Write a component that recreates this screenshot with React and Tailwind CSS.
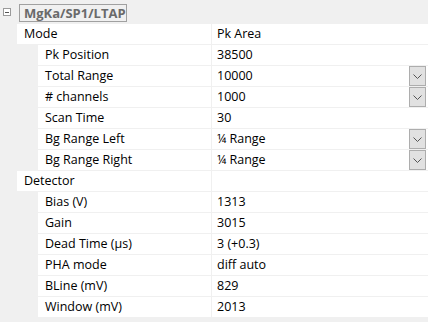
import React from "react";

const rows = [
  { label: "Mode", value: "Pk Area", level: 0 },
  { label: "Pk Position", value: "38500", level: 1 },
  { label: "Total Range", value: "10000", level: 1, dd: true },
  { label: "# channels", value: "1000", level: 1, dd: true },
  { label: "Scan Time", value: "30", level: 1 },
  { label: "Bg Range Left", value: "¼ Range", level: 1, dd: true },
  { label: "Bg Range Right", value: "¼ Range", level: 1, dd: true },
  { label: "Detector", value: "", level: 0 },
  { label: "Bias (V)", value: "1313", level: 1 },
  { label: "Gain", value: "3015", level: 1 },
  { label: "Dead Time (µs)", value: "3 (+0.3)", level: 1 },
  { label: "PHA mode", value: "diff auto", level: 1 },
  { label: "BLine (mV)", value: "829", level: 1 },
  { label: "Window (mV)", value: "2013", level: 1 },
];

function Chevron() {
  return (
    <svg width="9" height="5" viewBox="0 0 9 5" fill="none">
      <path d="M0.5 0.5 L4.5 4.5 L8.5 0.5" stroke="#555" strokeWidth="1" />
    </svg>
  );
}

export default function App() {
  return (
    <div
      className="w-[428px] h-[322px] bg-[#f0f0f0] text-[12.5px] text-black overflow-hidden"
      style={{ fontFamily: '"Open Sans", "Noto Sans", sans-serif' }}
    >
      <div className="h-[24px] flex items-start">
        <div className="mt-[8px] ml-[3px] w-[8px] h-[8px] border border-[#9a9a9a] bg-white flex items-center justify-center">
          <div className="w-[4px] h-px bg-[#555]" />
        </div>
        <div className="ml-[8px] mt-[4px] h-[18px] w-[108px] border border-[#a0a0a0] flex items-center pl-[4px] font-bold text-[#6a6a6a] text-[13px] leading-none">
          MgKa/SP1/LTAP
        </div>
      </div>
      <div className="flex flex-col gap-px">
        {rows.map((r, i) => (
          <div key={i} className="flex h-[20px]">
            <div className={`${r.level === 0 ? "ml-[17px] w-[194px] pl-[7px]" : "ml-[38px] w-[173px] pl-[7px]"} bg-white flex items-center leading-none pt-px`}>
              {r.label}
            </div>
            <div className="ml-px flex-1 bg-white flex items-center pl-[5px] leading-none pt-px relative">
              {r.value}
              {r.dd && (
                <div className="absolute right-[2px] top-0 w-[17px] h-[20px] bg-[#e1e1e1] border border-[#adadad] flex items-center justify-center">
                  <Chevron />
                </div>
              )}
            </div>
          </div>
        ))}
      </div>
    </div>
  );
}
